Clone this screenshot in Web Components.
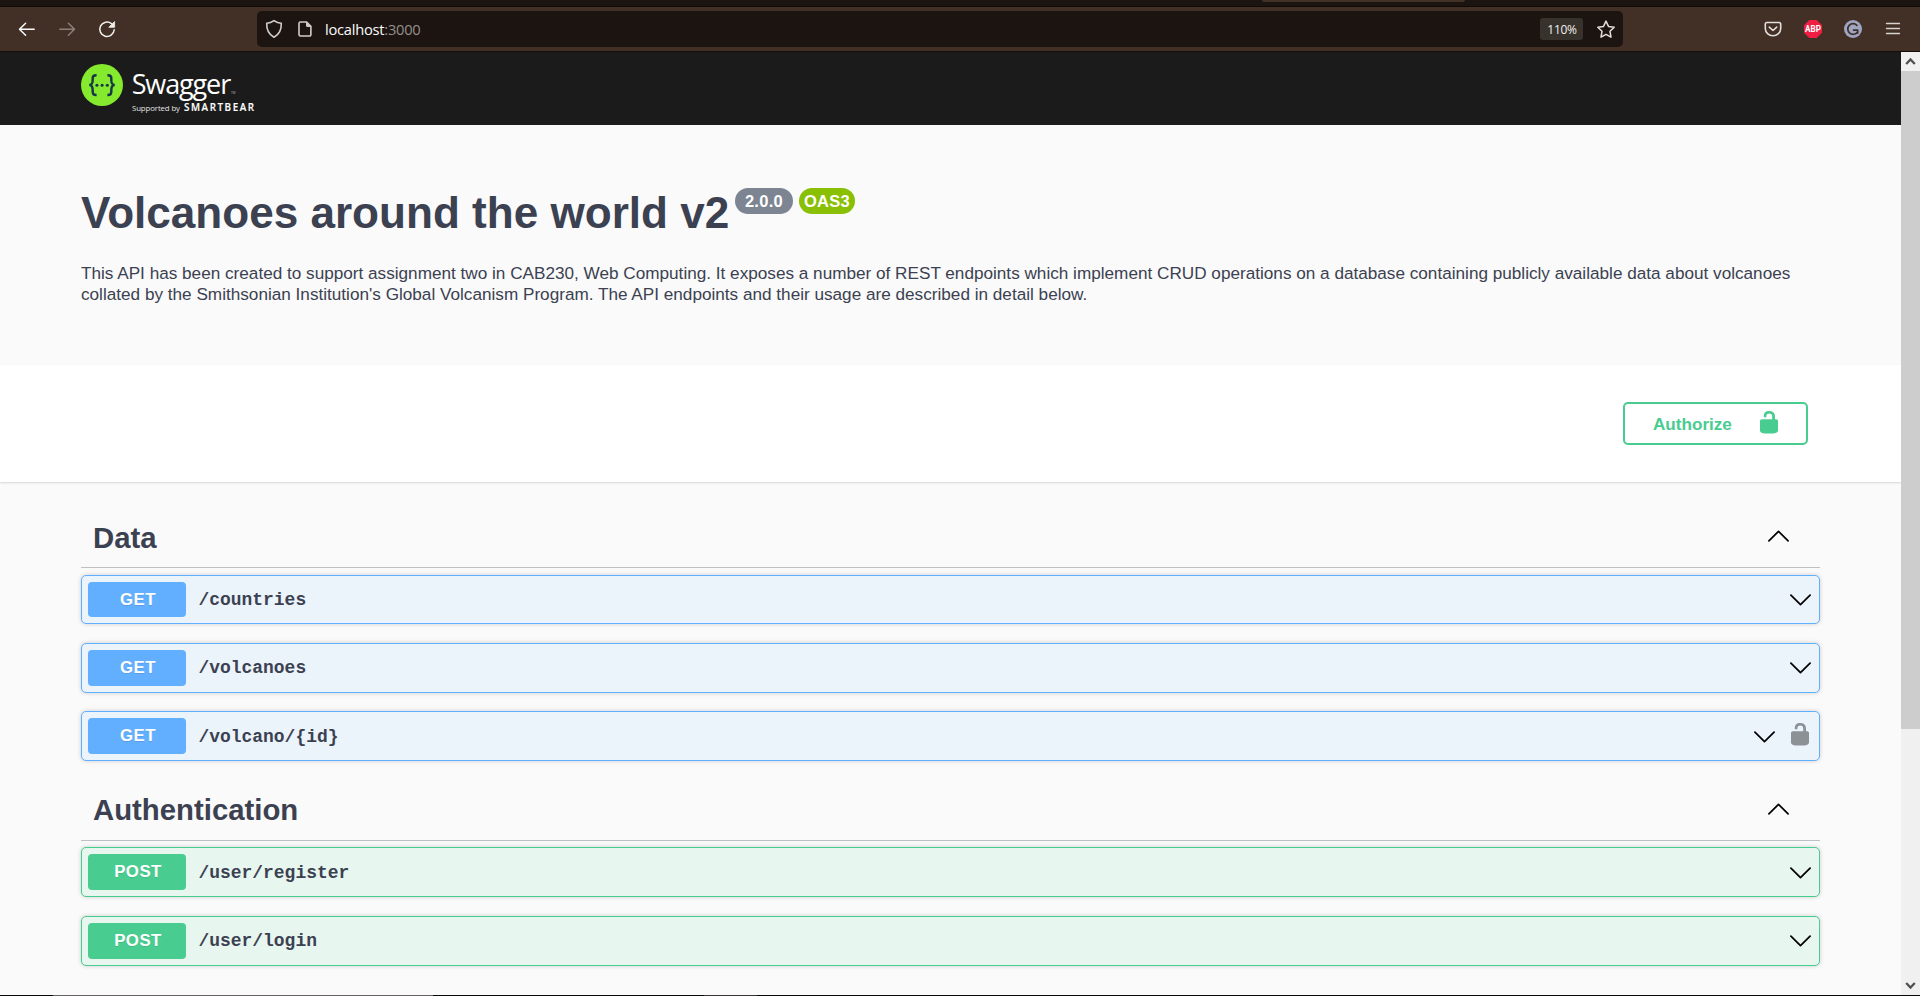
<!DOCTYPE html>
<html lang="en">
<head>
<meta charset="utf-8">
<title>Swagger UI</title>
<style>
html,body{margin:0;height:100%;overflow:hidden;background:#fafafa}
body{font-family:"Liberation Sans",Arial,sans-serif;color:#3b4151}
</style>
</head>
<body>
<app-window></app-window>
<script>
function define(name, html, setup) {
  const tpl = document.createElement('template');
  tpl.innerHTML = '<style>*{box-sizing:border-box}svg{display:block;flex:none}</style>' + html;
  customElements.define(name, class extends HTMLElement {
    constructor() {
      super();
      this.attachShadow({mode: 'open'}).appendChild(tpl.content.cloneNode(true));
    }
    connectedCallback() { if (setup) setup(this, this.shadowRoot); }
  });
}

define('ui-chevron', `
<style>:host{display:block;width:21px;height:12px}:host([up]) svg{transform:scaleY(-1)}</style>
<svg width="21" height="12" viewBox="0 0 21 12" fill="none" stroke="#000" stroke-width="1.7" stroke-linecap="round" stroke-linejoin="round"><path d="M.9 1.2 10.5 10.7 20.1 1.2"/></svg>`);

define('ui-lock', `
<style>:host{display:block;width:18px;height:23px}</style>
<svg width="18" height="23" viewBox="0 0 18 23"><path fill="currentColor" d="M15 8.2V5.6C15 2.1 12.800 0 9.200 0 5.800 0 3.800 1.900 3.800 5v1.200h2.600V5.200C6.400 3.400 7.500 2.500 9.200 2.500c1.900 0 3 1.100 3 3v2.700H1.800C.8 8.200 0 9 0 10v9.600c0 1 .7 1.800 1.600 2.100l1.600.6c.3.1.8.200 1.200.200h9c.4 0 .9-.1 1.200-.200l1.700-.6c1-.3 1.700-1.100 1.700-2.100V10c0-1-.8-1.800-1.800-1.800z"/></svg>`);

define('browser-toolbar', `
<style>
:host{display:block;background:#1c1410;height:52px}
.tabs{height:7px;border-bottom:1px solid #100a07;padding-left:1262px}
.tab{width:203px;height:2px;background:#423026;border-radius:0 0 2px 2px}
.bar{height:45px;background:#423026;border-bottom:1px solid #140e0a;display:flex;align-items:center;padding:0 18px 0 18px}
.nav{display:flex;gap:22px;width:239px}
.url{width:1366px;height:36px;margin-top:0;background:#1c1410;border-radius:5px;display:flex;align-items:center;padding:0 7px 0 8px}
.addr{font:14.7px "Open Sans","Noto Sans",sans-serif;color:#fbfbfe;margin-left:13px;flex:1;letter-spacing:-.25px;line-height:20px}
.addr span{color:#94908c}
.zoom{width:43px;height:22px;border-radius:3px;background:#38322d;color:#f2f0ee;font:12px/23px "Open Sans","Noto Sans",sans-serif;text-align:center;margin-right:13px;letter-spacing:-.3px;padding-left:1px}
.ext{margin-left:auto;display:flex;gap:22px;align-items:center}
</style>
<div class="tabs"><div class="tab"></div></div>
<div class="bar">
 <div class="nav">
  <svg width="18" height="18" viewBox="0 0 18 18" fill="none" stroke="#fbfbfe" stroke-width="1.5" stroke-linecap="round" stroke-linejoin="round"><path d="M16.200 9.300H1.800M7.600 3.200 1.500 9.300l6.100 6"/></svg>
  <svg width="18" height="18" viewBox="0 0 18 18" fill="none" stroke="#8b7f78" stroke-width="1.500" stroke-linecap="round" stroke-linejoin="round"><path d="M1.800 9.300h14.400M10.400 3.200l6.100 6.100-6.100 6"/></svg>
  <svg width="18" height="18" viewBox="0 0 18 18"><path fill="none" stroke="#f2f0ee" stroke-width="1.500" stroke-linecap="round" d="M13.500 3.600A7.200 7.200 0 1 0 16.200 9.800"/><path fill="#f2f0ee" d="M16.600 1.500v5.800h-5.800z" stroke="#f2f0ee" stroke-width=".8" stroke-linejoin="round"/></svg>
 </div>
 <div class="url">
  <svg width="18" height="20" viewBox="0 0 18 20" fill="none" stroke="#d0cdca" stroke-width="1.600" stroke-linejoin="round"><path d="M9 1.600c2.200 1.600 4.600 2.500 7.300 2.700.2 6.100-2.100 11.200-7.300 14C3.800 15.500 1.500 10.400 1.700 4.300 4.400 4.100 6.800 3.200 9 1.600z"/></svg>
  <svg style="margin-left:15px" width="14" height="16" viewBox="0 0 14 16"><path fill="none" stroke="#d0cdca" stroke-width="1.600" stroke-linejoin="round" d="M2.500 1h6.200L12.900 5.200v8.300a1.500 1.500 0 0 1-1.500 1.500H2.500A1.500 1.500 0 0 1 1 13.500v-11A1.500 1.500 0 0 1 2.500 1z"/><path fill="#d0cdca" d="M8 .8l5.400 5.300H9.500A1.500 1.500 0 0 1 8 4.600z"/></svg>
  <div class="addr">localhost<span>:3000</span></div>
  <div class="zoom">110%</div>
  <svg width="20" height="20" viewBox="0 0 20 20" fill="none" stroke="#e2dfdc" stroke-width="1.500" stroke-linejoin="round"><path d="M10 2.100l2.500 5.300 5.700.8-4.200 4.100 1 5.900-5-2.800-5 2.800 1-5.900-4.200-4.100 5.700-.8z"/></svg>
 </div>
 <div class="ext">
  <svg width="18" height="18" viewBox="0 0 18 18" fill="none" stroke="#e2dfdc" stroke-width="1.600" stroke-linecap="round" stroke-linejoin="round"><path d="M3 2.500h12a1.700 1.700 0 0 1 1.700 1.700v4.300a7.700 7.200 0 0 1-15.400 0V4.200A1.700 1.700 0 0 1 3 2.500z"/><path d="M5.300 7.100 9 10.500l3.700-3.400"/></svg>
  <svg width="18" height="18" viewBox="0 0 18 18"><path fill="#f01e43" d="M5.300 0h7.400L18 5.300v7.400L12.700 18H5.300L0 12.700V5.300z"/><text x="9" y="12.200" font-family="Roboto,sans-serif" font-size="9" font-weight="700" fill="#fff" text-anchor="middle" textLength="16" lengthAdjust="spacingAndGlyphs">ABP</text></svg>
  <svg width="18" height="18" viewBox="0 0 18 18"><circle cx="9" cy="9" r="9" fill="#9fa4c1"/><path fill="none" stroke="#3e302b" stroke-width="1.700" stroke-linecap="round" stroke-linejoin="round" d="M12.900 5.300A5.300 5.300 0 1 0 13.300 12.200M9.600 10.200h4.100v2.900"/></svg>
  <svg width="18" height="18" viewBox="0 0 18 18" fill="none" stroke="#d6d2ce" stroke-width="1.400" stroke-linecap="round"><path d="M2.500 3.500h13M2.500 8.500h13M2.500 13.500h13"/></svg>
 </div>
</div>`);

define('swagger-topbar', `
<style>
:host{display:flex;height:73px;background:#1b1b1b;padding:12px 0 0 81px}
.mark{margin-left:9px;color:#fff;font-family:"Open Sans","Noto Sans",sans-serif;display:flex;flex-direction:column}
</style>
<svg width="42" height="42" viewBox="0 0 42 42"><circle cx="21" cy="21" r="21" fill="#85ea2d"/><g fill="none" stroke="#173647" stroke-width="2.500"><path d="M15.600 11.300c-3.400-.1-4 1.100-3.900 3.800.1 3.600-.2 5.600-3.300 6 3.100.4 3.400 2.400 3.300 6-.1 2.700.5 3.900 3.900 3.800M26.400 11.300c3.400-.1 4 1.100 3.900 3.800-.1 3.600.2 5.600 3.300 6-3.100.4-3.400 2.400-3.300 6 .1 2.700-.5 3.900-3.900 3.800"/></g><g fill="#173647"><circle cx="15.900" cy="21.200" r="1.500"/><circle cx="21.100" cy="21.200" r="1.500"/><circle cx="26.300" cy="21.200" r="1.500"/></g></svg>
<div class="mark">
 <svg width="125" height="52" viewBox="0 0 125 52" fill="#fff" font-family="Open Sans,Noto Sans,sans-serif">
  <text x="-.3" y="29.500" font-size="27" font-weight="400" textLength="99.500" lengthAdjust="spacing">Swagger</text>
  <text x="99" y="30" font-size="3" fill="#bbb">TM</text>
  <text x="0" y="46.500" font-size="7.800" fill="#e4e4e4" textLength="48" lengthAdjust="spacing">Supported by</text>
  <text x="52" y="46.500" font-size="9.800" font-weight="600" stroke="#fff" stroke-width=".15" textLength="70" lengthAdjust="spacing">SMARTBEAR</text>
 </svg>
</div>`);

define('api-info', `
<style>
:host{display:block;height:240px;padding:63px 100px 0 81px}
h2{margin:0;display:flex;align-items:flex-start;font-size:44.080px;line-height:50px;font-weight:700;white-space:nowrap}
h2 span:first-child{width:647px}
.v{margin-left:7px;height:26px;line-height:26px;border-radius:26px;background:#7d8492;color:#fff;font-size:16.500px;width:58px;text-align:center;letter-spacing:.3px}
.oas{background:#89bf04;margin-left:6px;width:56px;letter-spacing:.3px}
p{margin:25px 0 0;font-size:17.165px;line-height:21.300px}
</style>
<h2><span>Volcanoes around the world v2</span><span class="v">2.0.0</span><span class="v oas">OAS3</span></h2>
<p>This API has been created to support assignment two in CAB230, Web Computing. It exposes a number of REST endpoints which implement CRUD operations on a database containing publicly available data about volcanoes collated by the Smithsonian Institution's Global Volcanism Program. The API endpoints and their usage are described in detail below.</p>`);

define('auth-bar', `
<style>
:host{display:flex;justify-content:flex-end;height:117px;background:#fff;box-shadow:0 1px 2px rgba(0,0,0,.15);padding:37px 93px 0 0}
.btn{width:185px;height:43px;border:2px solid #49cc90;border-radius:5px;color:#49cc90;font-weight:700;font-size:17.110px;line-height:41px;display:flex;justify-content:space-between;padding:0 28px 0 28px}
.btn span{line-height:42px}
ui-lock{margin-top:7px}
</style>
<div class="btn"><span>Authorize</span><ui-lock></ui-lock></div>`);

define('op-row', `
<style>
:host{display:flex;align-items:center;height:50px;border:1px solid var(--c);border-radius:5px;background:var(--b);box-shadow:0 0 4px rgba(0,0,0,.19);padding:0 8px 0 6px;--c:#61affe;--b:#ebf3fb}
:host([locked]){padding-right:9px}
:host([method=POST]){--c:#49cc90;--b:#e7f6ef}
.m{width:98px;align-self:stretch;margin:6px 0;border-radius:4px;background:var(--c);color:#fff;font-size:16.800px;font-weight:700;display:flex;align-items:center;justify-content:center;text-shadow:0 1px 0 rgba(0,0,0,.1);letter-spacing:.5px;padding-left:2px}
.p{flex:1;padding-left:12.500px;font:700 17.940px/22px "Liberation Mono",monospace}
ui-lock{margin:-3px 1px 0 16px;color:#8c9196;display:none}
:host([locked]) ui-lock{display:block}
:host([locked]) .p,:host([low]) .p{padding-top:2px}
:host([locked]) ui-chevron,:host([low]) ui-chevron{margin-top:1px}
</style>
<span class="m"></span><span class="p"><slot></slot></span><ui-chevron></ui-chevron><ui-lock></ui-lock>`,
(el, root) => { root.querySelector('.m').textContent = el.getAttribute('method'); });

define('tag-section', `
<style>
:host{display:block}
h3{margin:0 0 var(--gap,7px);height:var(--h,66px);border-bottom:1px solid #bfc0c3;display:flex;align-items:flex-end;justify-content:space-between;padding:0 31px 0 12px;font-size:29.330px;line-height:40px}
h3 slot{display:block;margin-bottom:var(--lift,9px)}
ui-chevron{margin-bottom:25px}
.rows{display:flex;flex-direction:column;gap:18px}
</style>
<h3><slot name="title"></slot><ui-chevron up></ui-chevron></h3>
<div class="rows"><slot></slot></div>`);

define('page-scrollbar', `
<style>
:host{display:flex;flex-direction:column;width:19px;background:#f0f0f0}
.b{height:19px;display:flex;align-items:center;justify-content:center}
.t{height:658px;background:#cdcdcd;margin-bottom:auto}
</style>
<div class="b"><svg width="11" height="9" viewBox="0 0 11 9" fill="none" stroke="#505050" stroke-width="2.300"><path d="M1.200 7 5.500 2.500 9.800 7"/></svg></div>
<div class="t"></div>
<div class="b"><svg width="11" height="9" viewBox="0 0 11 9" fill="none" stroke="#505050" stroke-width="2.300"><path d="M1.200 2 5.500 6.500 9.800 2"/></svg></div>`);

define('app-window', `
<style>
:host{display:flex;flex-direction:column;width:1920px;height:996px;overflow:hidden;background:#fafafa}
.view{display:flex;height:943px}
.page{flex:1;overflow:hidden}
.ops{padding:20px 81px 0 81px}
tag-section{margin-bottom:20px}
.edge{height:1px;background:linear-gradient(90deg,#0b0708 53px,#67625f 53px,#67625f 433px,#0b0708 433px,#0b0708 704px,#383330 704px,#383330 757px,#0b0708 757px)}
</style>
<browser-toolbar></browser-toolbar>
<div class="view">
 <div class="page">
  <swagger-topbar></swagger-topbar>
  <api-info></api-info>
  <auth-bar></auth-bar>
  <div class="ops">
   <tag-section>
    <span slot="title">Data</span>
    <op-row method="GET" style="height:49px;margin-bottom:1px">/countries</op-row>
    <op-row method="GET">/volcanoes</op-row>
    <op-row method="GET" locked>/volcano/{id}</op-row>
   </tag-section>
   <tag-section style="--h:60px;--gap:6px;--lift:10px">
    <span slot="title">Authentication</span>
    <op-row method="POST" low style="margin-bottom:1px">/user/register</op-row>
    <op-row method="POST">/user/login</op-row>
   </tag-section>
  </div>
 </div>
 <page-scrollbar></page-scrollbar>
</div>
<div class="edge"></div>`);
</script>
</body>
</html>
